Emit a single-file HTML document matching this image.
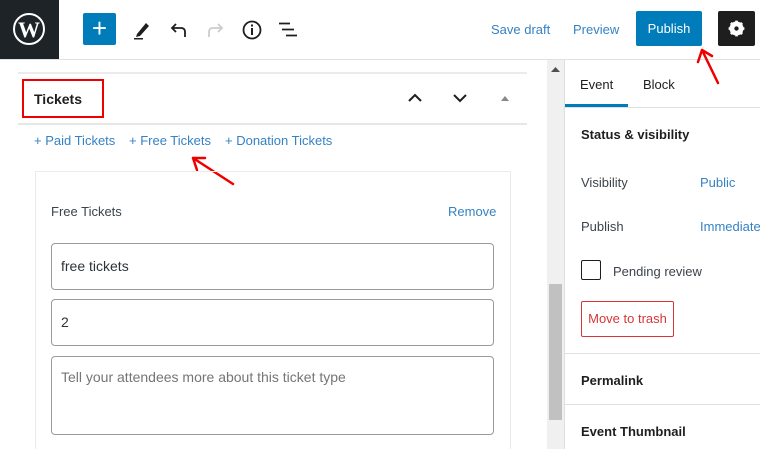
<!DOCTYPE html>
<html><head><style>
*{box-sizing:border-box;margin:0;padding:0}
html,body{width:760px;height:449px;overflow:hidden}
body{background:#fff;font-family:"Liberation Sans",sans-serif;position:relative;color:#1e1e1e}
.a{position:absolute}
.link{color:#3582c4;font-size:13px}
.in{position:absolute;left:51px;width:443px;border:1px solid #9a9a9a;border-radius:4px;font-size:14px;color:#2c3338;padding-left:9px}
</style></head><body>
<div class="a" style="left:0;top:0;width:59px;height:59px;background:#1d2327"></div>
<svg class="a" style="left:12px;top:12px" width="34" height="34" viewBox="0 0 34 34"><circle cx="17" cy="17" r="15" fill="none" stroke="#fff" stroke-width="2"/><text x="17" y="25" text-anchor="middle" font-family="Liberation Serif" font-weight="bold" font-size="22" fill="#fff">W</text></svg>
<div class="a" style="left:0;top:59px;width:760px;height:1px;background:#e0e0e0"></div>
<div class="a" style="left:83px;top:13px;width:33px;height:32px;background:#007cba;border-radius:2px;color:#fff;font-size:26px;line-height:30px;text-align:center">+</div>
<svg class="a" style="left:130px;top:18px" width="24" height="24" viewBox="0 0 24 24"><path d="M7 16 L16 5 L19 8 L10 18 L6 19 Z" fill="#1e1e1e"/><rect x="4" y="20" width="9" height="1.5" fill="#1e1e1e"/></svg>
<svg class="a" style="left:167px;top:18px" width="24" height="24" viewBox="0 0 24 24"><path d="M18 19 V14 Q18 10 14 10 H6 M9 6 L5 10 L9 14" fill="none" stroke="#1e1e1e" stroke-width="1.8"/></svg>
<svg class="a" style="left:203px;top:18px" width="24" height="24" viewBox="0 0 24 24"><path d="M6 19 V14 Q6 10 10 10 H18 M15 6 L19 10 L15 14" fill="none" stroke="#ccc" stroke-width="1.8"/></svg>
<svg class="a" style="left:240px;top:18px" width="24" height="24" viewBox="0 0 24 24"><circle cx="12" cy="12" r="8.5" fill="none" stroke="#1e1e1e" stroke-width="1.8"/><rect x="11" y="10" width="2" height="7" fill="#1e1e1e"/><rect x="11" y="6.5" width="2" height="2" fill="#1e1e1e"/></svg>
<svg class="a" style="left:276px;top:18px" width="24" height="24" viewBox="0 0 24 24"><path d="M3 5.5H14M6 11.5H18M10 17.5H21" stroke="#1e1e1e" stroke-width="1.8"/></svg>
<div class="a link" style="left:491px;top:22px">Save draft</div>
<div class="a link" style="left:573px;top:22px">Preview</div>
<div class="a" style="left:636px;top:11px;width:66px;height:35px;background:#007cba;border-radius:2px;color:#fff;font-size:13px;line-height:35px;text-align:center">Publish</div>
<div class="a" style="left:718px;top:11px;width:37px;height:35px;background:#1e1e1e;border-radius:2px"></div>
<svg class="a" style="left:726px;top:18px" width="21" height="21" viewBox="0 0 24 24"><circle cx="12" cy="12" r="6" fill="none" stroke="#fff" stroke-width="4"/><path d="M12 3V21M3 12H21M5.6 5.6L18.4 18.4M18.4 5.6L5.6 18.4" stroke="#fff" stroke-width="3"/><circle cx="12" cy="12" r="2.5" fill="#1e1e1e"/></svg>
<svg class="a" style="left:690px;top:44px" width="40" height="42" viewBox="0 0 40 42"><path d="M28 39 L12 6 M12 6 L8 18 M12 6 L22 12" fill="none" stroke="#e00" stroke-width="2.5" stroke-linecap="round"/></svg>
<div class="a" style="left:18px;top:72px;width:509px;height:2px;background:#ebebeb"></div>
<div class="a" style="left:18px;top:123px;width:509px;height:2px;background:#e6e6e6"></div>
<div class="a" style="left:22px;top:79px;width:82px;height:39px;border:2px solid #e00"></div>
<div class="a" style="left:34px;top:91px;font-size:14px;font-weight:bold;color:#1e1e1e">Tickets</div>
<svg class="a" style="left:405px;top:90px" width="20" height="16" viewBox="0 0 20 16"><path d="M4 11L10 5L16 11" fill="none" stroke="#1e1e1e" stroke-width="2"/></svg>
<svg class="a" style="left:450px;top:90px" width="20" height="16" viewBox="0 0 20 16"><path d="M4 5L10 11L16 5" fill="none" stroke="#1e1e1e" stroke-width="2"/></svg>
<svg class="a" style="left:500px;top:94px" width="10" height="8" viewBox="0 0 10 8"><path d="M1 7L5 2L9 7Z" fill="#888"/></svg>
<div class="a link" style="left:34px;top:133px">+ Paid Tickets</div>
<div class="a link" style="left:129px;top:133px">+ Free Tickets</div>
<div class="a link" style="left:225px;top:133px">+ Donation Tickets</div>
<svg class="a" style="left:185px;top:150px" width="55" height="38" viewBox="0 0 55 38"><path d="M48 34 L8 8 M8 8 L12 20 M8 8 L20 8" fill="none" stroke="#e00" stroke-width="2.5" stroke-linecap="round"/></svg>
<div class="a" style="left:35px;top:171px;width:476px;height:290px;border:1px solid #ebebeb"></div>
<div class="a" style="left:51px;top:204px;font-size:13px;color:#3c434a">Free Tickets</div>
<div class="a link" style="left:448px;top:204px">Remove</div>
<div class="in" style="top:243px;height:47px;line-height:45px">free tickets</div>
<div class="in" style="top:299px;height:47px;line-height:45px">2</div>
<div class="in" style="top:356px;height:79px;padding-top:12px;color:#757575">Tell your attendees more about this ticket type</div>
<div class="a" style="left:547px;top:60px;width:17px;height:389px;background:#f0f0f0"></div>
<div class="a" style="left:549px;top:284px;width:13px;height:136px;background:#c1c1c1"></div>
<svg class="a" style="left:551px;top:66px" width="9" height="6" viewBox="0 0 9 6"><path d="M0 6L4.5 1L9 6Z" fill="#505050"/></svg>
<div class="a" style="left:564px;top:60px;width:1px;height:389px;background:#e0e0e0"></div>
<div class="a" style="left:580px;top:77px;font-size:13px;color:#1e1e1e">Event</div>
<div class="a" style="left:643px;top:77px;font-size:13px;color:#1e1e1e">Block</div>
<div class="a" style="left:565px;top:104px;width:63px;height:3px;background:#007cba"></div>
<div class="a" style="left:565px;top:107px;width:195px;height:1px;background:#e0e0e0"></div>
<div class="a" style="left:581px;top:127px;font-size:13px;font-weight:bold">Status &amp; visibility</div>
<div class="a" style="left:581px;top:175px;font-size:13px;color:#3c434a">Visibility</div>
<div class="a link" style="left:700px;top:175px">Public</div>
<div class="a" style="left:581px;top:219px;font-size:13px;color:#3c434a">Publish</div>
<div class="a link" style="left:700px;top:219px;white-space:nowrap">Immediately</div>
<div class="a" style="left:581px;top:260px;width:20px;height:20px;border:1px solid #1e1e1e;border-radius:2px"></div>
<div class="a" style="left:613px;top:264px;font-size:13px;color:#3c434a">Pending review</div>
<div class="a" style="left:581px;top:301px;width:93px;height:36px;border:1px solid #d63638;border-radius:2px;color:#d63638;font-size:13px;line-height:34px;text-align:center">Move to trash</div>
<div class="a" style="left:565px;top:353px;width:195px;height:1px;background:#e0e0e0"></div>
<div class="a" style="left:581px;top:373px;font-size:13px;font-weight:bold">Permalink</div>
<div class="a" style="left:565px;top:404px;width:195px;height:1px;background:#e0e0e0"></div>
<div class="a" style="left:581px;top:424px;font-size:13px;font-weight:bold">Event Thumbnail</div>
</body></html>
